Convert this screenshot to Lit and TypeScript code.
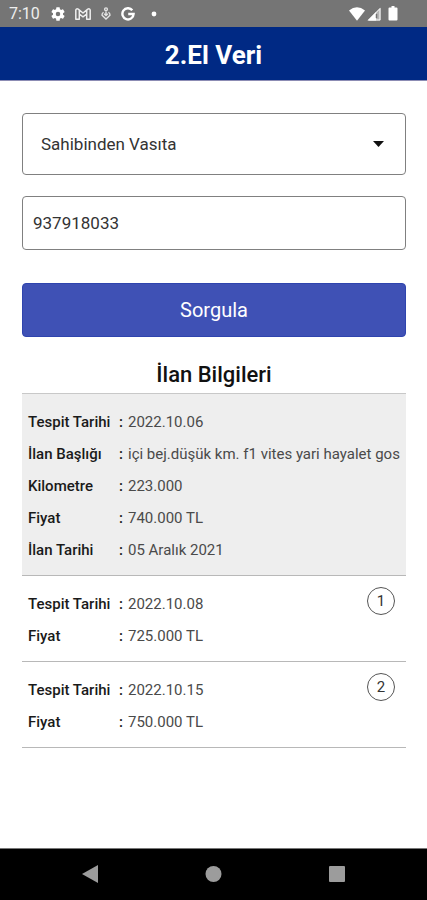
import { LitElement, html, css, nothing } from "lit";
import { customElement, property, state } from "lit/decorators.js";

type Field = [label: string, value: string];

interface Listing {
  fields: Field[];
  badge?: number;
}

const LISTINGS: Listing[] = [
  {
    fields: [
      ["Tespit Tarihi", "2022.10.06"],
      ["İlan Başlığı", "içi bej.düşük km. f1 vites yari hayalet gos"],
      ["Kilometre", "223.000"],
      ["Fiyat", "740.000 TL"],
      ["İlan Tarihi", "05 Aralık 2021"],
    ],
  },
  { badge: 1, fields: [["Tespit Tarihi", "2022.10.08"], ["Fiyat", "725.000 TL"]] },
  { badge: 2, fields: [["Tespit Tarihi", "2022.10.15"], ["Fiyat", "750.000 TL"]] },
];

@customElement("status-bar")
class StatusBar extends LitElement {
  static styles = css`
    :host {
      display: flex;
      align-items: center;
      justify-content: space-between;
      height: 27px;
      padding: 0 28px 0 9px;
      background: #757575;
      color: #eee;
      font-size: 16px;
    }
    .group { display: flex; align-items: center; gap: 10px; }
    .radio { display: flex; align-items: center; gap: 2px; }
    .time { margin-right: 1px; }
    svg { display: block; }
  `;

  render() {
    return html`
      <div class="group">
        <span class="time">7:10</span>
        <svg width="14" height="14" viewBox="2 2 20 20" fill="#fff">
          <path d="M19.14 12.94a7 7 0 0 0 0-1.88l2.03-1.58a.5.5 0 0 0 .12-.61l-1.92-3.32a.5.5 0 0 0-.59-.22l-2.39.96a7 7 0 0 0-1.62-.94l-.36-2.54a.5.5 0 0 0-.48-.41h-3.84a.5.5 0 0 0-.47.41l-.36 2.54a7 7 0 0 0-1.62.94l-2.39-.96a.5.5 0 0 0-.59.22L2.74 8.87a.5.5 0 0 0 .12.61l2.03 1.58a7 7 0 0 0 0 1.88l-2.03 1.58a.5.5 0 0 0-.12.61l1.92 3.32c.12.22.37.29.59.22l2.39-.96c.5.38 1.03.7 1.62.94l.36 2.54c.05.24.24.41.48.41h3.84c.24 0 .44-.17.47-.41l.36-2.54a7 7 0 0 0 1.62-.94l2.39.96c.22.08.47 0 .59-.22l1.92-3.32a.5.5 0 0 0-.12-.61zM12 15.2a3.2 3.2 0 1 1 0-6.4 3.2 3.2 0 0 1 0 6.4z" />
        </svg>
        <svg width="16" height="12" viewBox="0 0 16 12" fill="none" stroke="#eee" stroke-width="1.5" stroke-linejoin="round">
          <path d="M.8 11.2V2Q1.5.2 3.2 1.2L8 5l4.8-3.8Q14.5.2 15.2 2v9.2h-3.5V6L8 8.8 4.3 6v5.2zM4.3 6V2.3M11.7 6V2.3" />
        </svg>
        <svg width="10" height="13" viewBox="0 0 10 13" fill="none" stroke="#e4e4e4" stroke-width="1.4">
          <path d="M5 4.5v4M3.2 6.8 5 8.6l1.8-1.8M2.5 5.2Q.8 6.5 1 8.2L5 12l4-3.8q.2-1.7-1.5-3" />
          <circle cx="5" cy="2.3" r="1.4" />
        </svg>
        <svg width="14" height="14" viewBox="0 0 14 14" fill="none" stroke="#fff" stroke-width="2.4">
          <path d="M11.3 3.2A5.6 5.6 0 1 0 12.6 7H7.2" />
        </svg>
        <svg width="14" height="6" viewBox="0 0 14 6" fill="#fff"><circle cx="9" cy="3" r="2.4" /></svg>
      </div>
      <div class="radio">
        <svg width="16" height="14" viewBox="0 0 16 14" fill="#fff">
          <path d="M0 3.5Q8-3 16 3.5L8 13.7z" />
        </svg>
        <svg width="14" height="14" viewBox="0 0 14 14">
          <path d="M13.5.5v13H.5z" fill="#b5b5b5" />
          <path d="M9 5v8.5H.5z" fill="#fff" />
          <path d="M9.5 7v4" stroke="#757575" stroke-width="1.5" />
          <path d="M13 1.5V13H1.8z" fill="none" stroke="#fff" />
        </svg>
        <svg width="16" height="15" viewBox="0 0 16 15" fill="#fff">
          <path d="M8.5 0h3v1.5h2q1 0 1 1v11q0 1-1 1h-7q-1 0-1-1v-11q0-1 1-1h2z" />
        </svg>
      </div>
    `;
  }
}

@customElement("listing-card")
class ListingCard extends LitElement {
  @property({ attribute: false }) listing!: Listing;

  static styles = css`
    :host {
      display: block;
      position: relative;
      padding: 12px 0 9px 6px;
      border-bottom: 1px solid #b8b8b8;
      overflow: hidden;
      font-size: 15px;
      line-height: 32px;
    }
    .fields { margin: 0; }
    .row { display: flex; white-space: nowrap; }
    .label {
      display: flex;
      flex: none;
      justify-content: space-between;
      width: 95px;
      margin-right: 5px;
      font-weight: 500;
      color: #1a1a1a;
    }
    .value { margin: 0; color: #4a4a4a; }
    .badge {
      position: absolute;
      top: 11px;
      right: 11px;
      box-sizing: border-box;
      width: 28px;
      height: 28px;
      border: 1px solid #555;
      border-radius: 50%;
      line-height: 27px;
      text-align: center;
      color: #333;
    }
  `;

  render() {
    const { fields, badge } = this.listing;
    return html`
      <dl class="fields">
        ${fields.map(
          ([label, value]) => html`
            <div class="row">
              <dt class="label"><span>${label}</span><span>:</span></dt>
              <dd class="value">${value}</dd>
            </div>
          `,
        )}
      </dl>
      ${badge ? html`<span class="badge">${badge}</span>` : nothing}
    `;
  }
}

@customElement("app-root")
class AppRoot extends LitElement {
  @state() private code = "937918033";

  static styles = css`
    :host {
      display: flex;
      flex-direction: column;
      min-height: 100vh;
      background: #fff;
      color: #111;
      font-family: Roboto, "Noto Sans", sans-serif;
    }
    .header {
      padding-top: 4px;
      background: #002984;
      border-bottom: 1px solid #8c8cb4;
      color: #fff;
      text-align: center;
    }
    .title { margin: 0; font-size: 26px; font-weight: 700; line-height: 49px; }
    .content { flex: 1; padding: 32px 21px 24px 22px; }
    .form { display: flex; flex-direction: column; }
    .picker { position: relative; display: block; margin-bottom: 21px; }
    .select, .input, .submit {
      display: block;
      box-sizing: border-box;
      width: 100%;
      margin: 0;
      border-radius: 4px;
      font-family: inherit;
    }
    .select, .input {
      border: 1px solid #808080;
      background: #fff;
      color: #333;
      font-size: 17px;
    }
    .select { appearance: none; height: 62px; padding: 0 40px 0 18px; }
    .input { height: 54px; padding: 0 10px; }
    .arrow {
      position: absolute;
      top: 28px;
      right: 22px;
      width: 11px;
      height: 6px;
      pointer-events: none;
    }
    .submit {
      height: 54px;
      margin-top: 33px;
      border: 1px solid #2f44ae;
      background: #3f51b5;
      color: #fff;
      font-size: 20px;
    }
    .heading {
      margin: 24px 0 4px;
      font-size: 22px;
      font-weight: 500;
      line-height: 28px;
      text-align: center;
    }
    .current { border-top: 1px solid #c8c8c8; background: #eee; }
    .nav {
      display: flex;
      align-items: center;
      justify-content: space-around;
      box-sizing: border-box;
      height: 52px;
      padding: 0 28px 2px;
      border-top: 1px solid #777;
      background: #000;
    }
    .key { display: flex; padding: 8px; border: 0; background: none; }
  `;

  render() {
    return html`
      <status-bar></status-bar>
      <header class="header"><h1 class="title">2.El Veri</h1></header>
      <main class="content">
        <form class="form" @submit=${(e: Event) => e.preventDefault()}>
          <div class="picker">
            <select class="select" aria-label="Kategori">
              <option>Sahibinden Vasıta</option>
            </select>
            <svg class="arrow" viewBox="0 0 11 6"><path d="M0 0h11L5.5 6z" fill="#111" /></svg>
          </div>
          <input
            class="input"
            aria-label="İlan No"
            .value=${this.code}
            @input=${(e: Event) => (this.code = (e.target as HTMLInputElement).value)}
          />
          <button class="submit" type="submit">Sorgula</button>
        </form>
        <h2 class="heading">İlan Bilgileri</h2>
        ${LISTINGS.map(
          (item, i) => html`<listing-card class=${i === 0 ? "current" : "past"} .listing=${item}></listing-card>`,
        )}
      </main>
      <nav class="nav">
        <button class="key" aria-label="Geri">
          <svg width="18" height="18" viewBox="0 0 18 18" fill="#9c9c9c"><path d="M17 0v18L1 9z" /></svg>
        </button>
        <button class="key" aria-label="Ana ekran">
          <svg width="18" height="18" viewBox="0 0 18 18" fill="#9c9c9c"><circle cx="9.5" cy="9" r="8" /></svg>
        </button>
        <button class="key" aria-label="Son uygulamalar">
          <svg width="18" height="18" viewBox="0 0 18 18" fill="#9c9c9c"><rect x="1" y="1" width="16" height="16" rx="1" /></svg>
        </button>
      </nav>
    `;
  }
}
